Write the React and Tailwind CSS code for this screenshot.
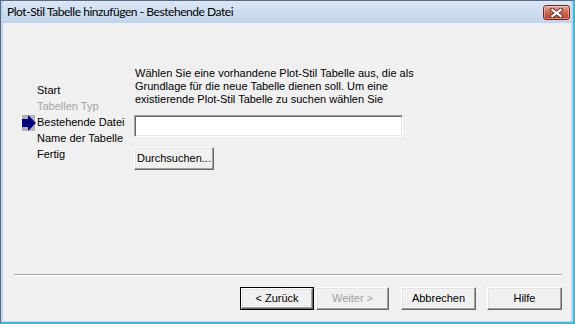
import React from "react";

function Btn({ children, w, disabled, isDefault, className = "" }) {
  const inner = (
    <div
      className={
        "flex h-full w-full items-center justify-center border-t border-l border-t-white border-l-white border-r border-b border-r-[#696969] border-b-[#696969] bg-[#f0f0f0] shadow-[inset_-1px_-1px_#a0a0a0,inset_1px_1px_#e3e3e3] " +
        (disabled ? "text-[#a0a0a0]" : "text-black")
      }
    >
      {children}
    </div>
  );
  return (
    <div
      className={
        "h-[23px] " + (isDefault ? "border border-black " : "") + className
      }
      style={{ width: w }}
    >
      {inner}
    </div>
  );
}

function Arrow() {
  return (
    <svg width="15" height="16" viewBox="0 0 15 16" className="block">
      <rect x="0" y="0" width="13" height="16" fill="#b4b4b4" />
      <rect x="0" y="4" width="7" height="8" fill="#000080" />
      <polygon points="6,0 14,8 6,16" fill="#000080" />
    </svg>
  );
}

export default function App() {
  const nav = [
    { t: "Start" },
    { t: "Tabellen Typ", dis: true },
    { t: "Bestehende Datei", cur: true },
    { t: "Name der Tabelle" },
    { t: "Fertig" },
  ];
  return (
    <div
      className="flex h-[324px] w-[575px] flex-col border-l border-t border-l-[#5b6b82] border-t-[#5b6b82] border-r-2 border-b-2 border-r-[#38bde2] border-b-[#38bde2] bg-[#bfd4ec] pl-[2px] pr-[2px] pb-[1px]"
      style={{ fontFamily: '"Liberation Sans", Arial, sans-serif' }}
    >
      {/* title bar */}
      <div className="flex h-[22px] items-start justify-between bg-gradient-to-b from-[#dce7f5] to-[#bfd4ec]">
        <div
          className="pl-[4px] pt-[3px] text-[12px] leading-[16px] tracking-[-0.45px] text-black"
          style={{ fontFamily: 'Lato, "Noto Sans", sans-serif' }}
        >
          Plot-Stil Tabelle hinzufügen - Bestehende Datei
        </div>
        <div className="mr-[1px] mt-[4px] flex h-[15px] w-[27px] items-center justify-center rounded-[3px] border border-[#6f2a20] bg-gradient-to-b from-[#e9a897] via-[#d2644d] to-[#c1432c] shadow-[inset_0_0_0_1px_rgba(255,255,255,0.35)]">
          <svg width="13" height="10" viewBox="0 0 13 10">
            <path
              d="M2 1.5 L11 8.5 M11 1.5 L2 8.5"
              stroke="#5a2a22"
              strokeWidth="4"
              strokeLinecap="round"
            />
            <path
              d="M2.3 1.8 L10.7 8.2 M10.7 1.8 L2.3 8.2"
              stroke="#ffffff"
              strokeWidth="2.2"
              strokeLinecap="square"
            />
          </svg>
        </div>
      </div>

      {/* content */}
      <div className="flex h-[298px] flex-col bg-[#f0f0f0] text-[11px] text-black">
        <div className="flex h-[251px]">
          {/* left nav */}
          <div className="w-[131px] shrink-0 pl-[19px] pt-[59px]">
            {nav.map((n) => (
              <div key={n.t} className="flex h-[16px] items-start">
                <div className="w-[15px] shrink-0 pt-[1px]">
                  {n.cur ? <Arrow /> : null}
                </div>
                <div
                  className={
                    "whitespace-nowrap leading-[16px] " +
                    (n.dis ? "text-[#a5a5a5]" : "text-black")
                  }
                >
                  {n.t}
                </div>
              </div>
            ))}
          </div>
          {/* right */}
          <div className="flex flex-col items-start pt-[44px]">
            <div className="pl-[1px] leading-[13px] whitespace-nowrap">
              Wählen Sie eine vorhandene Plot-Stil Tabelle aus, die als
              <br />
              Grundlage für die neue Tabelle dienen soll. Um eine
              <br />
              existierende Plot-Stil Tabelle zu suchen wählen Sie
            </div>
            <div className="mt-[9px] h-[22px] w-[269px] border-t border-l border-t-[#a0a0a0] border-l-[#a0a0a0] border-r border-b border-r-white border-b-white bg-white shadow-[inset_1px_1px_#696969,inset_-1px_-1px_#e3e3e3]" />
            <Btn w={80} className="mt-[10px]">
              Durchsuchen...
            </Btn>
          </div>
        </div>
        <div className="ml-[11px] mr-[9px] border-t border-b border-t-[#a0a0a0] border-b-white" />
        <div className="mt-[11px] flex justify-end pr-[9px]">
          <Btn w={74} isDefault>
            &lt; Zurück
          </Btn>
          <Btn w={73} disabled className="ml-[2px]">
            Weiter &gt;
          </Btn>
          <Btn w={75} className="ml-[12px]">
            Abbrechen
          </Btn>
          <Btn w={75} className="ml-[11px]">
            Hilfe
          </Btn>
        </div>
      </div>
    </div>
  );
}
